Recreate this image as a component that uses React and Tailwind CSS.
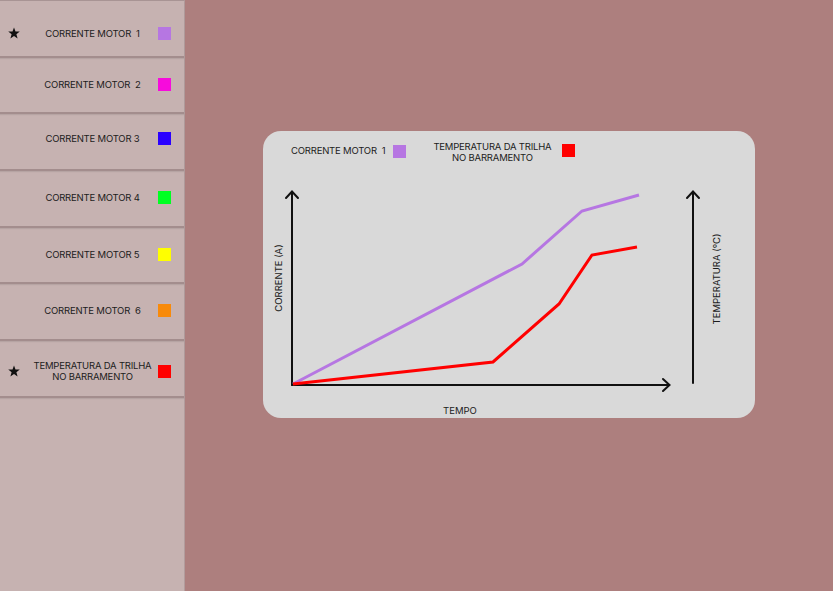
const rows = [
  { label: "CORRENTE MOTOR  1", color: "bg-[#b676e2]", star: true, pad: "pt-[10px]" },
  { label: "CORRENTE MOTOR  2", color: "bg-[#f70bdc]", star: false, pad: "pb-[2px]" },
  { label: "CORRENTE MOTOR 3", color: "bg-[#2a00ff]", star: false, pad: "pb-[6px]" },
  { label: "CORRENTE MOTOR 4", color: "bg-[#00ff22]", star: false, pad: "pb-[2px]" },
  { label: "CORRENTE MOTOR 5", color: "bg-[#ffff00]", star: false, pad: "pb-[2px]" },
  { label: "CORRENTE MOTOR  6", color: "bg-[#f88a0a]", star: false, pad: "pb-[3px]" },
  { label: "TEMPERATURA DA TRILHA\nNO BARRAMENTO", color: "bg-[#ff0000]", star: true, pad: "pt-[6px]" },
];

function Star() {
  return (
    <svg width="12" height="12" viewBox="0 0 24 24">
      <polygon
        points="12,1 15,9 23.5,9.2 16.8,14.4 19.2,22.8 12,17.8 4.8,22.8 7.2,14.4 0.5,9.2 9,9"
        fill="#111"
      />
    </svg>
  );
}

function Row({ row }) {
  return (
    <div
      className={
        "h-[56.7px] flex items-center border-b-2 border-[#a38d8d] shadow-[0_1px_1px_rgba(0,0,0,0.08)] " +
        row.pad
      }
    >
      <div className="w-[27px] flex justify-center">{row.star && <Star />}</div>
      <div className="w-[131px] text-center whitespace-pre leading-[11px] text-[9.5px] tracking-[-0.2px] text-[#1c1c1c]">
        {row.label}
      </div>
      <div className={"w-[13px] h-[13px] " + row.color}></div>
    </div>
  );
}

export default function App() {
  return (
    <div
      className="w-[833px] h-[591px] flex bg-[#ad7f7e] overflow-hidden"
      style={{ fontFamily: "Inter, 'Liberation Sans', sans-serif" }}
    >
      <div className="w-[185px] h-full bg-[#c6b2b1] border-t border-[#a89494] border-r border-r-[#b29c9c]">
        {rows.map((r, i) => (
          <Row key={i} row={r} />
        ))}
      </div>

      <div className="flex-1 pl-[78px] pt-[131px]">
        <div className="w-[492px] h-[287px] rounded-[18px] bg-[#d9d9d9] flex flex-col">
          <div className="h-[41px] flex items-center pl-[28px] text-[9.5px] tracking-[-0.2px] text-[#1c1c1c]">
            <span className="whitespace-pre">CORRENTE MOTOR  1</span>
            <div className="w-[13px] h-[13px] ml-[8px] bg-[#b676e2]"></div>
            <div className="ml-[27px] text-center leading-[11px]">
              TEMPERATURA DA TRILHA
              <br />
              NO BARRAMENTO
            </div>
            <div className="w-[13px] h-[13px] ml-[11px] -mt-[2px] bg-[#ff0000]"></div>
          </div>

          <svg width="492" height="246" viewBox="263 172 492 246">
            <g stroke="#111" strokeWidth="2" fill="none" strokeLinecap="round">
              <line x1="292" y1="192" x2="292" y2="385" />
              <polyline points="286,198 292,191.5 298,198" />
              <line x1="292" y1="385" x2="669" y2="385" />
              <polyline points="663,379 669.5,385 663,391" />
              <line x1="693" y1="192" x2="693" y2="383" />
              <polyline points="687,198 693,191.5 699,198" />
            </g>
            <polyline
              points="293,384 522,264 582,211 639,195"
              stroke="#b676e2"
              strokeWidth="3"
              fill="none"
            />
            <polyline
              points="293,384 493,362 559,304 592,255 637,247"
              stroke="#ff0000"
              strokeWidth="3"
              fill="none"
            />
            <g fontSize="9.5" fill="#1c1c1c" textAnchor="middle" dominantBaseline="central">
              <text x="278" y="278" transform="rotate(-90 278 278)">CORRENTE (A)</text>
              <text x="716.5" y="279" transform="rotate(-90 716.5 279)">TEMPERATURA (ºC)</text>
              <text x="460" y="410">TEMPO</text>
            </g>
          </svg>
        </div>
      </div>
    </div>
  );
}
